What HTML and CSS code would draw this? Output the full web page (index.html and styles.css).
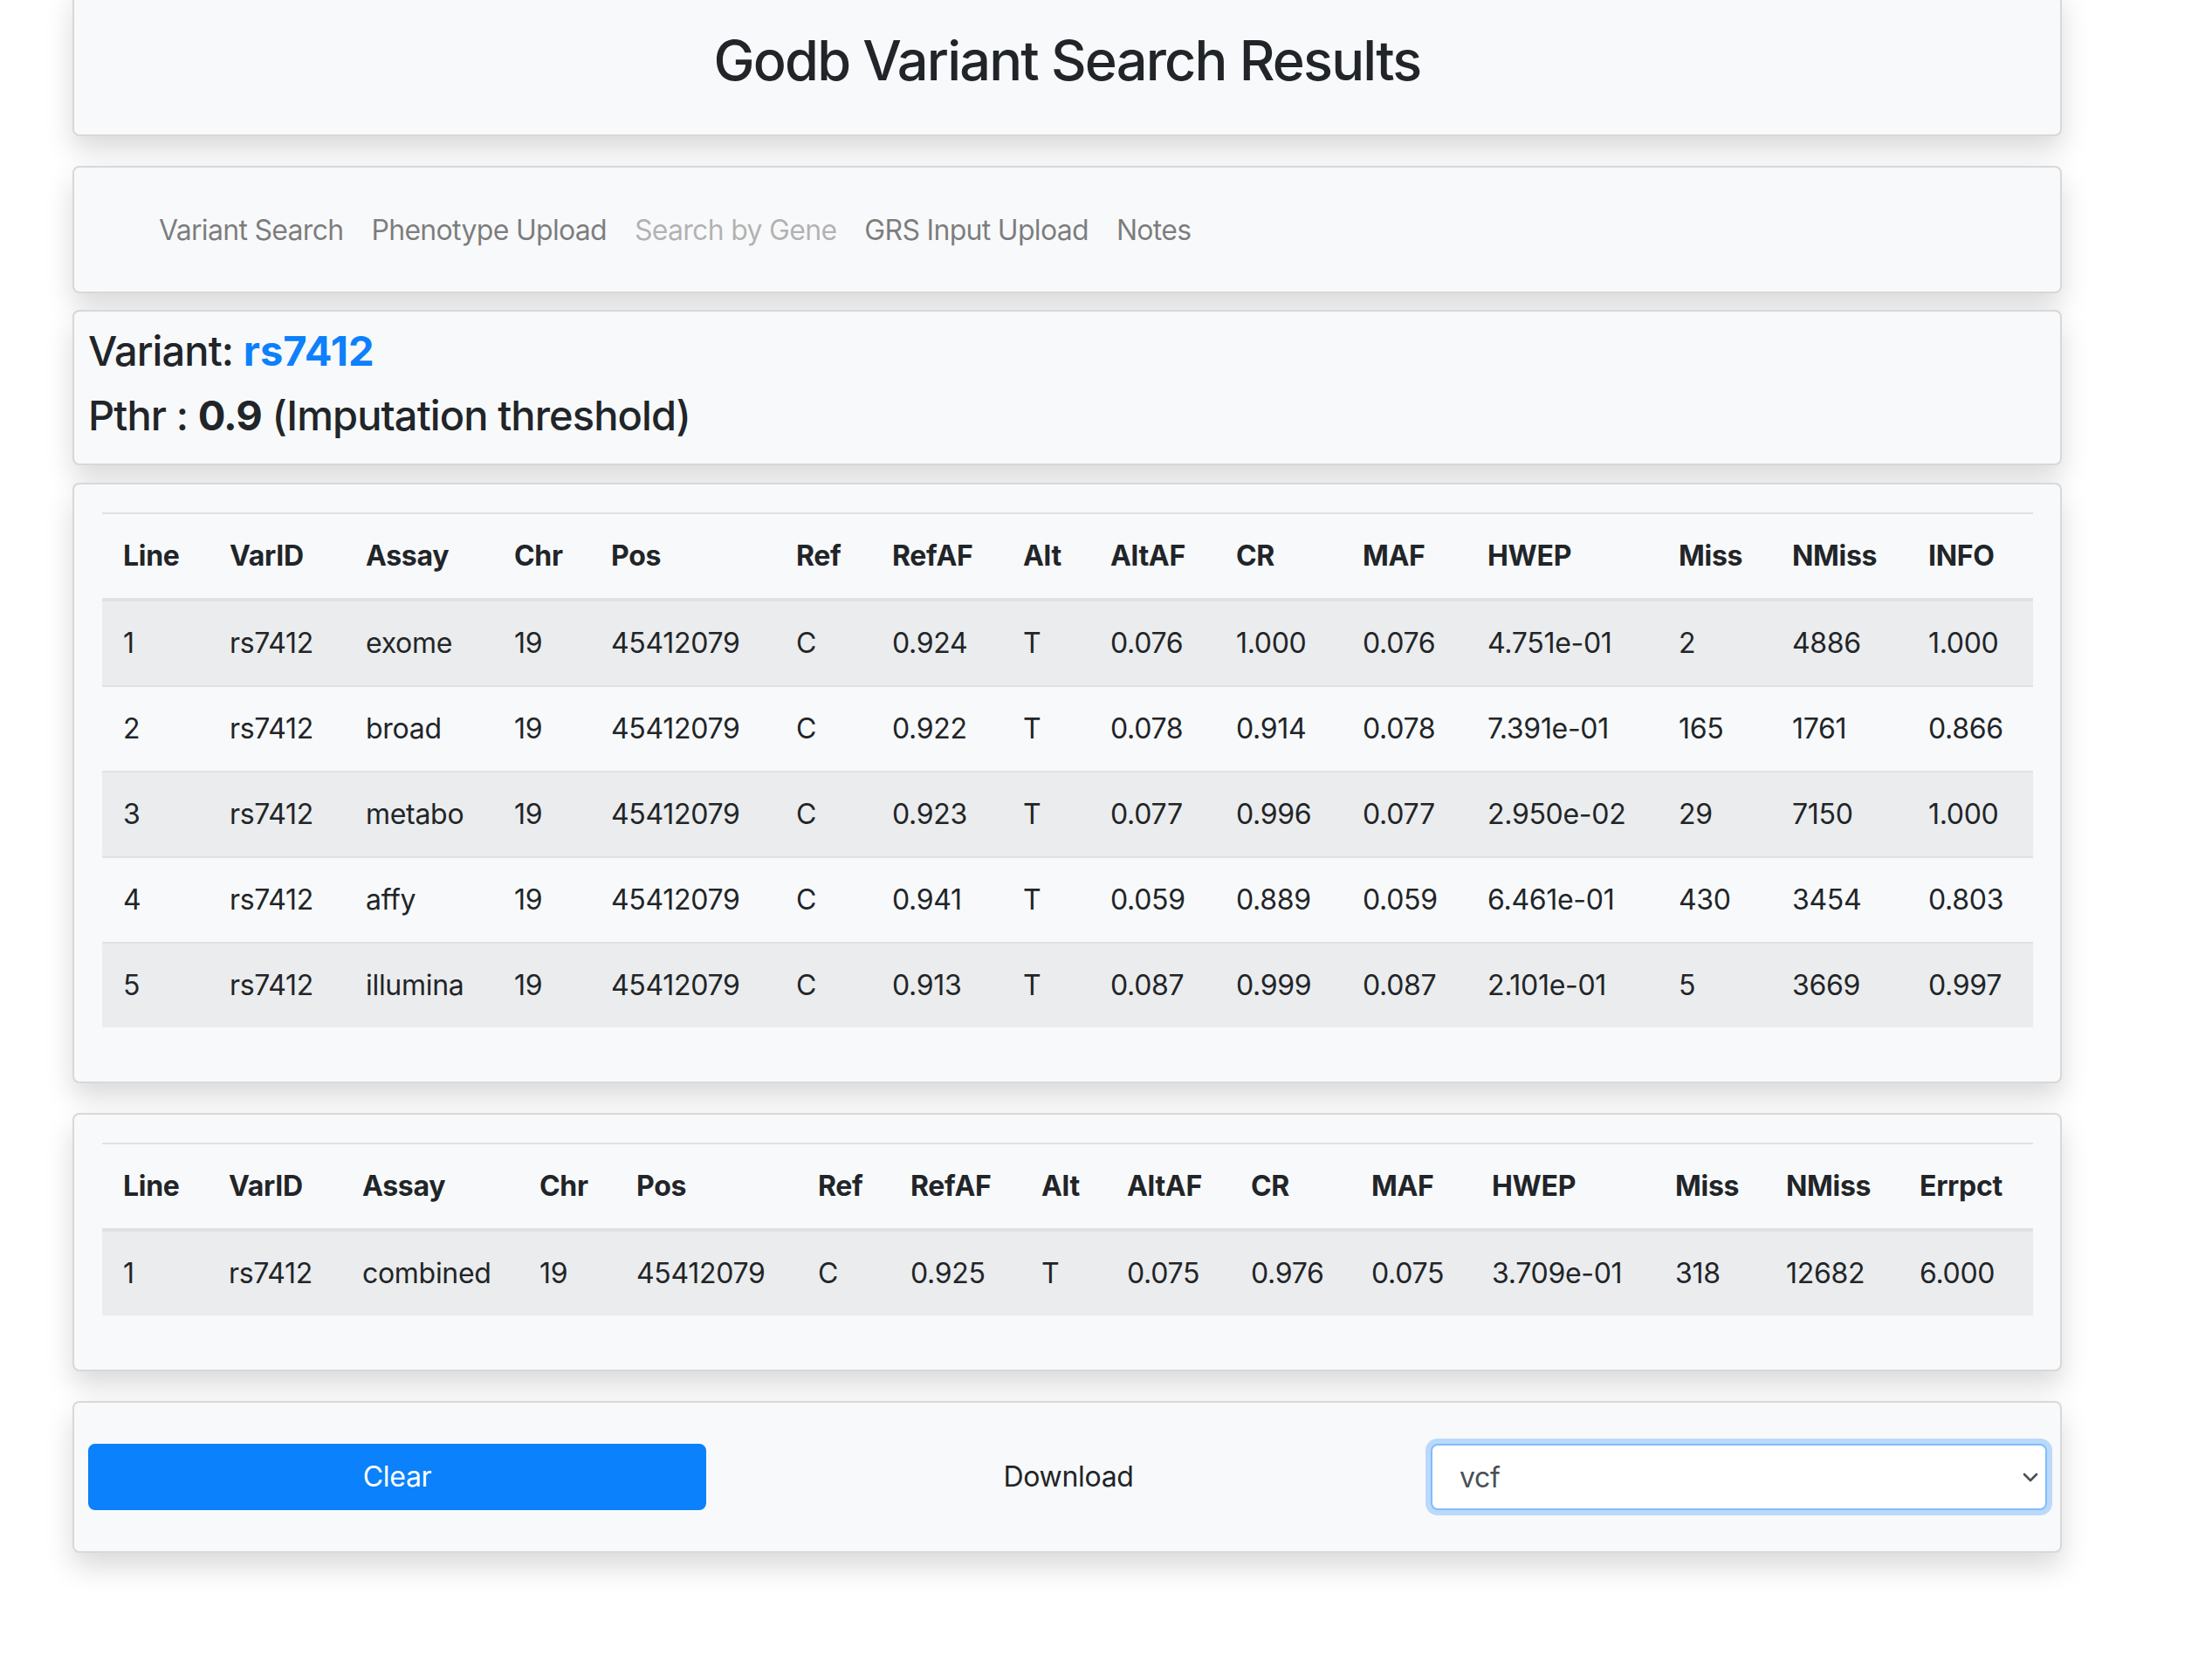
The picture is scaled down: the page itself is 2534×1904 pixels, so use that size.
FILE: index.html
```html
<!DOCTYPE html>
<html lang="en">
<head>
<meta charset="utf-8">
<title>Godb Variant Search Results</title>
<link rel="stylesheet" href="styles.css">
</head>
<body>
<main class="page">
  <section class="card card-title">
    <h2 class="title">Godb Variant Search Results</h2>
  </section>

  <nav class="card card-nav">
    <a class="nav-link" href="#">Variant Search</a>
    <a class="nav-link" href="#">Phenotype Upload</a>
    <a class="nav-link disabled" href="#">Search by Gene</a>
    <a class="nav-link" href="#">GRS Input Upload</a>
    <a class="nav-link" href="#">Notes</a>
  </nav>

  <section class="card card-info">
    <h4 class="info-line">Variant: <a class="variant-link" href="#">rs7412</a></h4>
    <h4 class="info-line">Pthr : <b>0.9</b> (Imputation threshold)</h4>
  </section>

  <section class="card card-table">
    <table class="table t1">
      <colgroup>
        <col><col><col><col><col><col><col><col><col><col><col><col><col><col><col>
      </colgroup>
      <thead>
        <tr><th>Line</th><th>VarID</th><th>Assay</th><th>Chr</th><th>Pos</th><th>Ref</th><th>RefAF</th><th>Alt</th><th>AltAF</th><th>CR</th><th>MAF</th><th>HWEP</th><th>Miss</th><th>NMiss</th><th>INFO</th></tr>
      </thead>
      <tbody>
        <tr><td>1</td><td>rs7412</td><td>exome</td><td>19</td><td>45412079</td><td>C</td><td>0.924</td><td>T</td><td>0.076</td><td>1.000</td><td>0.076</td><td>4.751e-01</td><td>2</td><td>4886</td><td>1.000</td></tr>
        <tr><td>2</td><td>rs7412</td><td>broad</td><td>19</td><td>45412079</td><td>C</td><td>0.922</td><td>T</td><td>0.078</td><td>0.914</td><td>0.078</td><td>7.391e-01</td><td>165</td><td>1761</td><td>0.866</td></tr>
        <tr><td>3</td><td>rs7412</td><td>metabo</td><td>19</td><td>45412079</td><td>C</td><td>0.923</td><td>T</td><td>0.077</td><td>0.996</td><td>0.077</td><td>2.950e-02</td><td>29</td><td>7150</td><td>1.000</td></tr>
        <tr><td>4</td><td>rs7412</td><td>affy</td><td>19</td><td>45412079</td><td>C</td><td>0.941</td><td>T</td><td>0.059</td><td>0.889</td><td>0.059</td><td>6.461e-01</td><td>430</td><td>3454</td><td>0.803</td></tr>
        <tr><td>5</td><td>rs7412</td><td>illumina</td><td>19</td><td>45412079</td><td>C</td><td>0.913</td><td>T</td><td>0.087</td><td>0.999</td><td>0.087</td><td>2.101e-01</td><td>5</td><td>3669</td><td>0.997</td></tr>
      </tbody>
    </table>
  </section>

  <section class="card card-table">
    <table class="table t2">
      <colgroup>
        <col><col><col><col><col><col><col><col><col><col><col><col><col><col><col>
      </colgroup>
      <thead>
        <tr><th>Line</th><th>VarID</th><th>Assay</th><th>Chr</th><th>Pos</th><th>Ref</th><th>RefAF</th><th>Alt</th><th>AltAF</th><th>CR</th><th>MAF</th><th>HWEP</th><th>Miss</th><th>NMiss</th><th>Errpct</th></tr>
      </thead>
      <tbody>
        <tr><td>1</td><td>rs7412</td><td>combined</td><td>19</td><td>45412079</td><td>C</td><td>0.925</td><td>T</td><td>0.075</td><td>0.976</td><td>0.075</td><td>3.709e-01</td><td>318</td><td>12682</td><td>6.000</td></tr>
      </tbody>
    </table>
  </section>

  <section class="card card-actions">
    <button class="btn-clear" type="button">Clear</button>
    <div class="download">Download</div>
    <div class="select-wrap">
      <select class="format-select">
        <option>vcf</option>
        <option>csv</option>
      </select>
      <svg class="chevron" width="18" height="11" viewBox="0 0 18 11" aria-hidden="true">
        <path d="M2 2 L9 9 L16 2" fill="none" stroke="#495057" stroke-width="2.6" stroke-linecap="round" stroke-linejoin="round"/>
      </svg>
    </div>
  </section>
</main>
</body>
</html>
```

FILE: styles.css
```css
* {
  box-sizing: border-box;
}

html, body {
  margin: 0;
  padding: 0;
  background: #ffffff;
}

body {
  font-family: Inter, "Liberation Sans", Arial, sans-serif;
  font-size: 32px;
  line-height: 1.5;
  color: #212529;
  padding-bottom: 120px;
}

.page {
  margin-left: 83px;
  width: 2279px;
  display: flex;
  flex-direction: column;
}

.card {
  background: #f8f9fa;
  border: 2px solid rgba(0, 0, 0, 0.13);
  border-radius: 8px;
  box-shadow: 0 16px 32px rgba(0, 0, 0, 0.15);
}

/* Title card */
.card-title {
  margin-top: -15px;
  padding: 44px 16px 46px;
  text-align: center;
}

.title {
  margin: 0;
  font-size: 63px;
  font-weight: 500;
  line-height: 77px;
  letter-spacing: -1.8px;
}

/* Nav card */
.card-nav {
  margin-top: 34px;
  padding: 48px 16px 46px 81px;
  display: flex;
  align-items: center;
}

.nav-link {
  display: block;
  padding: 0 16px;
  line-height: 48px;
  color: rgba(0, 0, 0, 0.5);
  text-decoration: none;
  letter-spacing: -0.7px;
}

.nav-link.disabled {
  color: rgba(0, 0, 0, 0.3);
}

/* Info card */
.card-info {
  margin-top: 19px;
  padding: 16px 16px 11px;
}

.info-line {
  margin: 0 0 16px;
  font-size: 47px;
  font-weight: 500;
  line-height: 57.6px;
  letter-spacing: -0.9px;
}

.info-line b {
  font-weight: 700;
}

.variant-link {
  color: #0d80fb;
  font-weight: 700;
  text-decoration: none;
  letter-spacing: 0;
}

/* Table cards */
.card-table {
  padding: 32px 30px 32px 32px;
}

.card-info + .card-table {
  margin-top: 20px;
}

.card-table + .card-table {
  margin-top: 34px;
}

.table {
  width: 2212px;
  table-layout: fixed;
  border-collapse: collapse;
  margin-bottom: 30px;
  color: #212529;
}

.table th,
.table td {
  padding: 24px;
  line-height: 48px;
  text-align: left;
  vertical-align: top;
  border-top: 2px solid #dee2e6;
  white-space: nowrap;
  letter-spacing: -0.3px;
}

.table th {
  font-weight: 700;
}

.table thead th {
  border-bottom: 4px solid #dee2e6;
}

.table tbody tr:nth-of-type(odd) {
  background-color: rgba(0, 0, 0, 0.05);
}

.t1 col:nth-child(1) { width: 122px; }
.t1 col:nth-child(2) { width: 156px; }
.t1 col:nth-child(3) { width: 170px; }
.t1 col:nth-child(4) { width: 111px; }
.t1 col:nth-child(5) { width: 212px; }
.t1 col:nth-child(6) { width: 110px; }
.t1 col:nth-child(7) { width: 150px; }
.t1 col:nth-child(8) { width: 100px; }
.t1 col:nth-child(9) { width: 144px; }
.t1 col:nth-child(10) { width: 145px; }
.t1 col:nth-child(11) { width: 143px; }
.t1 col:nth-child(12) { width: 219px; }
.t1 col:nth-child(13) { width: 130px; }
.t1 col:nth-child(14) { width: 156px; }
.t1 col:nth-child(15) { width: 144px; }

.t2 col:nth-child(1) { width: 121px; }
.t2 col:nth-child(2) { width: 153px; }
.t2 col:nth-child(3) { width: 203px; }
.t2 col:nth-child(4) { width: 111px; }
.t2 col:nth-child(5) { width: 208px; }
.t2 col:nth-child(6) { width: 106px; }
.t2 col:nth-child(7) { width: 150px; }
.t2 col:nth-child(8) { width: 98px; }
.t2 col:nth-child(9) { width: 142px; }
.t2 col:nth-child(10) { width: 138px; }
.t2 col:nth-child(11) { width: 138px; }
.t2 col:nth-child(12) { width: 210px; }
.t2 col:nth-child(13) { width: 127px; }
.t2 col:nth-child(14) { width: 153px; }
.t2 col:nth-child(15) { width: 154px; }

/* Actions card */
.card-actions {
  margin-top: 34px;
  padding: 47px 15px 47px 16px;
  display: grid;
  grid-template-columns: 708px 1fr 706px;
  align-items: center;
}

.btn-clear {
  height: 76px;
  width: 100%;
  border: 2px solid #0b81fb;
  border-radius: 8px;
  background: #0b81fb;
  color: #ffffff;
  font-family: inherit;
  font-size: 32px;
  line-height: 48px;
  letter-spacing: -0.3px;
  padding: 0;
}

.download {
  text-align: center;
  line-height: 48px;
  letter-spacing: -0.3px;
}

.select-wrap {
  position: relative;
  height: 76px;
}

.format-select {
  appearance: none;
  -webkit-appearance: none;
  width: 100%;
  height: 76px;
  padding: 0 60px 0 31px;
  border: 2px solid #80bdff;
  border-radius: 8px;
  background: #ffffff;
  box-shadow: 0 0 0 6px rgba(0, 123, 255, 0.25);
  color: #495057;
  font-family: inherit;
  font-size: 32px;
  letter-spacing: -0.3px;
  outline: none;
}

.chevron {
  position: absolute;
  right: 10px;
  top: 33px;
  pointer-events: none;
}
```
